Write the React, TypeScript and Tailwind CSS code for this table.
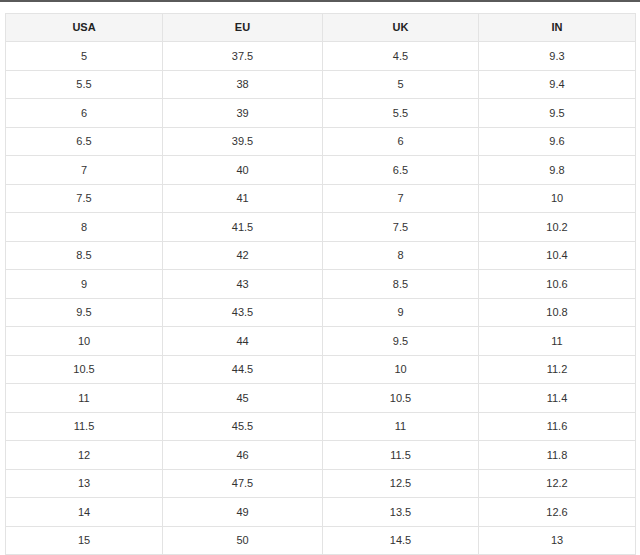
import React from "react";

const rows: [string, string, string, string][] = [
  ["5", "37.5", "4.5", "9.3"],
  ["5.5", "38", "5", "9.4"],
  ["6", "39", "5.5", "9.5"],
  ["6.5", "39.5", "6", "9.6"],
  ["7", "40", "6.5", "9.8"],
  ["7.5", "41", "7", "10"],
  ["8", "41.5", "7.5", "10.2"],
  ["8.5", "42", "8", "10.4"],
  ["9", "43", "8.5", "10.6"],
  ["9.5", "43.5", "9", "10.8"],
  ["10", "44", "9.5", "11"],
  ["10.5", "44.5", "10", "11.2"],
  ["11", "45", "10.5", "11.4"],
  ["11.5", "45.5", "11", "11.6"],
  ["12", "46", "11.5", "11.8"],
  ["13", "47.5", "12.5", "12.2"],
  ["14", "49", "13.5", "12.6"],
  ["15", "50", "14.5", "13"],
];

const headers = ["USA", "EU", "UK", "IN"];

export default function App() {
  return (
    <div
      className="w-[640px] h-[555px] bg-white overflow-hidden"
      style={{ fontFamily: '"Liberation Sans", Arial, sans-serif' }}
    >
      <div className="h-[2px] bg-[#5a5a5a]" />
      <div className="pt-[11px] pl-[5px]">
        <div className="w-[631px] border-l border-t border-[#e3e3e3]">
          <div className="grid grid-cols-[157px_160px_156px_157px] h-[28px] bg-[#f5f5f5]">
            {headers.map((h) => (
              <div
                key={h}
                className="flex items-center justify-center border-r border-b border-[#e3e3e3] text-[11px] font-bold text-[#222]"
              >
                {h}
              </div>
            ))}
          </div>
          {rows.map((r, i) => (
            <div key={i} className="grid grid-cols-[157px_160px_156px_157px] h-[28.5px]">
              {r.map((c, j) => (
                <div
                  key={j}
                  className="flex items-center justify-center border-r border-b border-[#e3e3e3] text-[11px] text-[#333]"
                >
                  {c}
                </div>
              ))}
            </div>
          ))}
        </div>
      </div>
    </div>
  );
}
